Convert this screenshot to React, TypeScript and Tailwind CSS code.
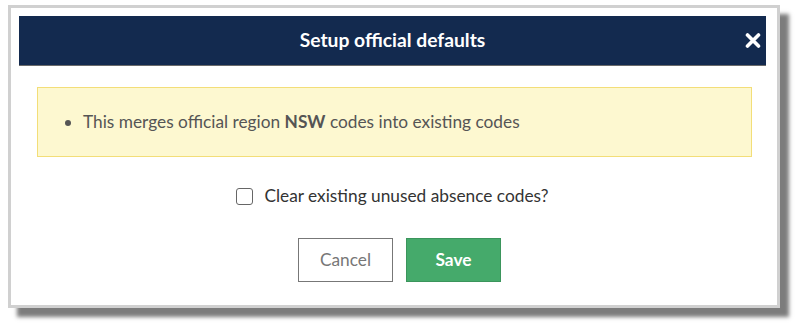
export default function App() {
  return (
    <div className="w-[798px] h-[323px] bg-white" style={{ fontFamily: "Lato, 'Noto Sans', sans-serif" }}>
      <div className="relative left-[8px] top-[5px] w-[772px] h-[303px] border-[3px] border-[#d0d0d0] bg-white shadow-[9px_9px_4px_#7c7c7c]">
        <div className="ml-[8px] mt-[8px] w-[747px]">
          <div className="relative flex h-[50px] items-center justify-center bg-[#132a4f] border-b border-[#6a6a6a]">
            <h1 className="text-[19.3px] font-bold text-white">Setup official defaults</h1>
            <button className="absolute right-[5px] top-[17px] w-[16px] h-[15px]">
              <svg viewBox="0 0 16 15" className="w-[16px] h-[15px]">
                <path d="M2.5 2 L13.5 13 M13.5 2 L2.5 13" stroke="white" strokeWidth="3.6" strokeLinecap="round" />
              </svg>
            </button>
          </div>

          <div className="ml-[18px] mt-[21px] w-[715px] h-[70px] border border-[#f3de78] bg-[#fdf8d0] flex items-center">
            <ul className="list-disc ml-[45px] text-[17.3px] text-[#555555] marker:text-[#555555]">
              <li>
                This merges official region <b className="font-bold">NSW</b> codes into existing codes
              </li>
            </ul>
          </div>

          <div className="mt-[27px] h-[24px] flex items-center justify-center">
            <span className="w-[17px] h-[17px] rounded-[3px] border border-[#666666] bg-white" />
            <span className="ml-[11px] text-[17.3px] text-[#333333]">Clear existing unused absence codes?</span>
          </div>

          <div className="mt-[30px] flex justify-center gap-[13px] pl-[14px]">
            <button className="w-[95px] h-[44px] border border-[#777777] bg-white text-[17.3px] text-[#777777]">Cancel</button>
            <button className="w-[95px] h-[44px] border border-[#3b955c] bg-[#45aa6b] text-[17.3px] font-bold text-white">Save</button>
          </div>
        </div>
      </div>
    </div>
  );
}
